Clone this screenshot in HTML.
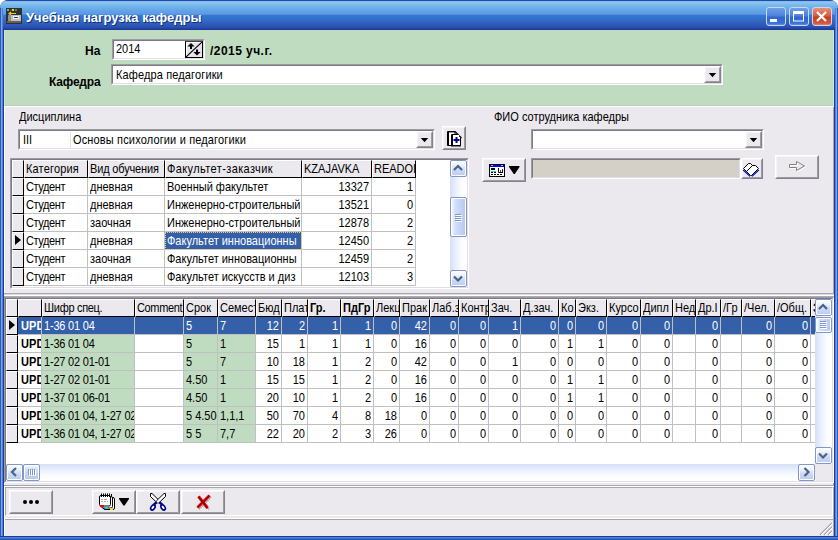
<!DOCTYPE html>
<html><head><meta charset="utf-8"><title>Учебная нагрузка кафедры</title>
<style>
*{box-sizing:border-box;margin:0;padding:0}
html,body{width:838px;height:540px;overflow:hidden;background:#fff}
body{font-family:"Liberation Sans",sans-serif;font-size:11px;color:#000;position:relative}
.a{position:absolute}
.t{position:absolute;white-space:nowrap;line-height:13px;height:13px;transform:scaleY(1.13);transform-origin:0 10px}
.x{display:inline-block;line-height:13px;height:13px;transform:scaleY(1.13);transform-origin:0 10px}
.b{font-weight:bold}
#win{position:absolute;left:0;top:0;width:838px;height:540px;overflow:hidden;background:#2a58c0;border-radius:8px 8px 0 0}
#title{position:absolute;left:0;top:0;width:838px;height:30px;border-radius:8px 8px 0 0;
background:linear-gradient(to bottom,#1c40a8 0px,#2a54b8 1px,#9accf2 1.6px,#84c3ee 3px,#70b2ea 7px,#62a2e8 11px,#5c98e4 14.3px,#3478d2 15.2px,#3270c8 19px,#3060bc 23px,#2c52b0 27px,#2244a4 28.4px,#1c3a9c 29.2px,#1c3a9c 30px)}
#title .tx{position:absolute;left:26px;top:10px;font-weight:bold;font-size:13px;line-height:15px;color:#fff;text-shadow:1px 1px 0 #10307a;white-space:nowrap}
.lb{position:absolute;top:8px;width:1px;height:528px}
#client{position:absolute;left:4px;top:30px;width:830px;height:506px;background:#ebe9ed}
.sunk{position:absolute;background:#fff;border:1px solid;border-color:#9c9aa2 #fff #fff #9c9aa2}
.sunk:before{content:"";position:absolute;left:0;top:0;right:0;bottom:0;border:1px solid;border-color:#7c7a84 #e0dee4 #e0dee4 #7c7a84;pointer-events:none}
.btn{position:absolute;background:#ebe9ed;border:1px solid;border-color:#fff #84828a #84828a #fff}
.btn:before{content:"";position:absolute;left:0;top:0;right:0;bottom:0;border:1px solid;border-color:#f6f4f8 #9c9aa2 #9c9aa2 #f6f4f8}
.cb{position:absolute;background:#ebe9ed;border:1px solid;border-color:#fff #84828a #84828a #fff}
.cb:before{content:"";position:absolute;left:0;top:0;right:0;bottom:0;border:1px solid;border-color:#f6f4f8 #9c9aa2 #9c9aa2 #f6f4f8}
.tri{position:absolute;width:0;height:0;border-style:solid;border-color:#000 transparent transparent transparent}
.grid{position:absolute;background:#fff;overflow:hidden}
.c{position:absolute;height:18px;border-right:1px solid #c0c0c0;border-bottom:1px solid #c0c0c0;white-space:nowrap;overflow:hidden;line-height:13px;padding:3px 2px 0 2px}
.h{position:absolute;height:18px;background:#ebe9ed;border:1px solid;border-color:#fff #000 #000 #fff;white-space:nowrap;overflow:hidden;line-height:13px;padding:2px 1px 0 1px}
.r{text-align:right}
.g{background:#c0dcc0}
.s{background:#3360a8;color:#fff}
.sbv{position:absolute;width:17px;background:linear-gradient(to right,#d4e0f8 0%,#eaf0fc 35%,#fbfcff 70%,#ffffff 100%)}
.sbh{position:absolute;height:17px;background:linear-gradient(to bottom,#d4e0f8 0%,#eaf0fc 35%,#fbfcff 70%,#ffffff 100%)}
.sbb{position:absolute;width:17px;height:17px;border:1px solid #8397c6;border-radius:2px;background:linear-gradient(to bottom,#ffffff 0%,#eaf1fd 30%,#c9d8f5 60%,#bccdee 100%);box-shadow:inset 0 0 0 1px #fff}
.thv{background:linear-gradient(to right,#ffffff 0%,#d4e1f9 25%,#c4d4f4 60%,#b6c7ea 100%)}
.thh{background:linear-gradient(to bottom,#ffffff 0%,#d4e1f9 25%,#c4d4f4 60%,#b6c7ea 100%)}
</style></head><body>
<div id="win">
<div id="title"><div class="tx">Учебная нагрузка кафедры</div></div>
<div class="lb" style="left:0;background:#2a58c0"></div><div class="lb" style="left:1px;background:#7aa6e2"></div><div class="lb" style="left:2px;background:#4f80d2"></div><div class="lb" style="left:3px;top:30px;height:506px;background:#1c3c9a"></div>
<div class="lb" style="left:834px;top:30px;height:506px;background:#1c3c9a"></div><div class="lb" style="left:835px;background:#4f80d2"></div><div class="lb" style="left:836px;background:#7aa6e2"></div><div class="lb" style="left:837px;background:#2a58c0"></div>
<div class="a" style="left:0;top:536px;width:838px;height:4px;background:linear-gradient(to bottom,#1c3c9a 0,#1c3c9a 25%,#4f80d2 25%,#4f80d2 50%,#3a6ccc 50%,#3a6ccc 75%,#2a58c0 75%)"></div>
<div id="client">
<div class="a" style="left:0;top:0;width:830px;height:76px;background:#c0dcc0;border-left:1px solid #cfe8cf;border-right:1px solid #cfe8cf;border-bottom:1px solid #b4d2b4"></div>
<div class="a" style="left:0;top:76px;width:830px;height:1px;background:#fff"></div>
<div class="a" style="left:0;top:77px;width:1px;height:429px;background:#fff"></div>
<div class="a" style="left:829px;top:77px;width:1px;height:429px;background:#a8a5a8"></div>
<div class="t b" style="left:81px;top:15px;font-size:12px">На</div>
<div class="t b" style="left:45px;top:46px;font-size:12px;letter-spacing:-0.2px">Кафедра</div>
<div class="t b" style="left:206px;top:15px;font-size:12px;letter-spacing:0.45px">/2015 уч.г.</div>
<div class="sunk" style="left:108px;top:9px;width:93px;height:21px"><div class="t" style="left:3px;top:3px">2014</div></div>
<div class="a" id="spin" style="left:181px;top:11px;width:18px;height:17px;background:#e6e4ea;border:1px solid #000;border-top-color:#404040"><svg width="16" height="15" viewBox="0 0 16 15" style="position:absolute;left:0;top:0"><path d="M0.5 15 V0.5 H16" stroke="#fff" fill="none"/><path d="M16 0 L0 15" stroke="#000" stroke-width="1.1" fill="none"/><path d="M5 1 L8.6 4.6 H6 V7 H4 V4.6 H1.4 Z" fill="#000"/><path d="M11 13.6 L14.6 10 H12 V7.6 H10 V10 H7.4 Z" fill="#000"/></svg></div>
<div class="sunk" style="left:107px;top:34px;width:612px;height:21px"><div class="t" style="left:4px;top:4px;letter-spacing:0.13px">Кафедра педагогики</div></div>
<div class="cb" style="left:700px;top:36px;width:17px;height:17px"><svg width="9" height="6" viewBox="0 0 9 6" style="position:absolute;left:3px;top:5px"><path d="M0.8 1 H8.2 L4.5 5.2 Z" fill="#000"/></svg></div>
<div class="t" style="left:15px;top:81px">Дисциплина</div>
<div class="sunk" style="left:14px;top:99px;width:417px;height:21px"><div class="t" style="left:4px;top:4px">III</div><div class="a" style="left:51px;top:2px;width:1px;height:16px;background:#e4e4e4"></div><div class="t" style="left:54px;top:4px;letter-spacing:0.15px">Основы психологии и педагогики</div></div>
<div class="cb" style="left:412px;top:101px;width:17px;height:17px"><svg width="9" height="6" viewBox="0 0 9 6" style="position:absolute;left:3px;top:5px"><path d="M0.8 1 H8.2 L4.5 5.2 Z" fill="#000"/></svg></div>
<div class="btn" style="left:438px;top:96px;width:24px;height:24px"><svg width="24" height="24" viewBox="0 0 24 24" style="position:absolute;left:-1px;top:-1px"><path d="M5.5 5.5 H13 V19.5 H5.5 Z" fill="#fff" stroke="#000"/><path d="M6.5 6 V19" stroke="#000"/><path d="M5 6.2 H13" stroke="#000" stroke-width="0.6"/><path d="M13 5.5 L19.5 12" stroke="#000" stroke-width="1.1" fill="none"/><path d="M9.5 8.5 H15.5 L18.5 11.5 V19.5 H9.5 Z" fill="#fff" stroke="#000"/><path d="M10.5 9 V19 M9 20 H19" stroke="#000"/><rect x="16" y="9" width="1.2" height="1.2" fill="#fff"/><path d="M14.5 11 V17 M11.5 14 H17.5" stroke="#000090" stroke-width="2"/></svg></div>
<div class="sunk" style="left:6px;top:128px;width:459px;height:131px"></div>
<div class="grid" id="g1" style="left:8px;top:130px;width:455px;height:127px">
<div class="h" style="left:0px;top:0;width:12px"><span class="x"></span></div>
<div class="h" style="left:12px;top:0;width:64px"><span class="x" style="letter-spacing:0.17px">Категория</span></div>
<div class="h" style="left:76px;top:0;width:77px"><span class="x" style="letter-spacing:-0.16px">Вид обучения</span></div>
<div class="h" style="left:153px;top:0;width:137px"><span class="x" style="letter-spacing:0.39px">Факультет-заказчик</span></div>
<div class="h" style="left:290px;top:0;width:70px"><span class="x">KZAJAVKA</span></div>
<div class="h" style="left:360px;top:0;width:44px"><span class="x">READOI</span></div>
<div class="h" style="left:0;top:18px;width:12px"></div>
<div class="c" style="left:12px;top:18px;width:64px"><span class="x" style="letter-spacing:-0.4px">Студент</span></div>
<div class="c" style="left:76px;top:18px;width:77px"><span class="x">дневная</span></div>
<div class="c" style="left:153px;top:18px;width:137px"><span class="x">Военный факультет</span></div>
<div class="c r" style="left:290px;top:18px;width:70px"><span class="x">13327</span></div>
<div class="c r" style="left:360px;top:18px;width:44px"><span class="x">1</span></div>
<div class="h" style="left:0;top:36px;width:12px"></div>
<div class="c" style="left:12px;top:36px;width:64px"><span class="x" style="letter-spacing:-0.4px">Студент</span></div>
<div class="c" style="left:76px;top:36px;width:77px"><span class="x">дневная</span></div>
<div class="c" style="left:153px;top:36px;width:137px"><span class="x">Инженерно-строительный</span></div>
<div class="c r" style="left:290px;top:36px;width:70px"><span class="x">13521</span></div>
<div class="c r" style="left:360px;top:36px;width:44px"><span class="x">0</span></div>
<div class="h" style="left:0;top:54px;width:12px"></div>
<div class="c" style="left:12px;top:54px;width:64px"><span class="x" style="letter-spacing:-0.4px">Студент</span></div>
<div class="c" style="left:76px;top:54px;width:77px"><span class="x">заочная</span></div>
<div class="c" style="left:153px;top:54px;width:137px"><span class="x">Инженерно-строительный</span></div>
<div class="c r" style="left:290px;top:54px;width:70px"><span class="x">12878</span></div>
<div class="c r" style="left:360px;top:54px;width:44px"><span class="x">2</span></div>
<div class="h" style="left:0;top:72px;width:12px"><div class="a" style="left:2px;top:2px;width:0;height:0;border-style:solid;border-width:5.5px 0 5.5px 6px;border-color:transparent transparent transparent #000"></div></div>
<div class="c" style="left:12px;top:72px;width:64px"><span class="x" style="letter-spacing:-0.4px">Студент</span></div>
<div class="c" style="left:76px;top:72px;width:77px"><span class="x">дневная</span></div>
<div class="c s" style="left:153px;top:72px;width:137px;outline:1px dotted #e8d080;outline-offset:-1px"><span class="x">Факультет инновационны</span></div>
<div class="c r" style="left:290px;top:72px;width:70px"><span class="x">12450</span></div>
<div class="c r" style="left:360px;top:72px;width:44px"><span class="x">2</span></div>
<div class="h" style="left:0;top:90px;width:12px"></div>
<div class="c" style="left:12px;top:90px;width:64px"><span class="x" style="letter-spacing:-0.4px">Студент</span></div>
<div class="c" style="left:76px;top:90px;width:77px"><span class="x">заочная</span></div>
<div class="c" style="left:153px;top:90px;width:137px"><span class="x">Факультет инновационны</span></div>
<div class="c r" style="left:290px;top:90px;width:70px"><span class="x">12459</span></div>
<div class="c r" style="left:360px;top:90px;width:44px"><span class="x">2</span></div>
<div class="h" style="left:0;top:108px;width:12px"></div>
<div class="c" style="left:12px;top:108px;width:64px"><span class="x" style="letter-spacing:-0.4px">Студент</span></div>
<div class="c" style="left:76px;top:108px;width:77px"><span class="x">дневная</span></div>
<div class="c" style="left:153px;top:108px;width:137px"><span class="x">Факультет искусств и диз</span></div>
<div class="c r" style="left:290px;top:108px;width:70px"><span class="x">12103</span></div>
<div class="c r" style="left:360px;top:108px;width:44px"><span class="x">3</span></div>
<div class="sbv" style="left:438px;top:0;height:127px"></div>
<div class="sbb" style="left:438px;top:0"><svg width="17" height="17" viewBox="0 0 17 17" style="position:absolute;left:-1px;top:-1px"><path d="M4 10 L8 6 L12 10" stroke="#4d6185" stroke-width="2.2" fill="none"/></svg></div>
<div class="sbb" style="left:438px;top:110px"><svg width="17" height="17" viewBox="0 0 17 17" style="position:absolute;left:-1px;top:-1px"><path d="M4 6.5 L8 10.5 L12 6.5" stroke="#4d6185" stroke-width="2.2" fill="none"/></svg></div>
<div class="sbb thv" style="left:438px;top:37px;height:40px"><div class="a" style="left:4px;top:16px;width:6px;height:1px;background:#8397c6;box-shadow:0 2px 0 #8397c6,0 4px 0 #8397c6,0 6px 0 #8397c6,1px 1px 0 #fff,1px 3px 0 #fff,1px 5px 0 #fff,1px 7px 0 #fff"></div></div>
</div>
<div class="t" style="left:490px;top:81px">ФИО сотрудника кафедры</div>
<div class="sunk" style="left:527px;top:99px;width:233px;height:21px"></div>
<div class="cb" style="left:741px;top:101px;width:17px;height:17px"><svg width="9" height="6" viewBox="0 0 9 6" style="position:absolute;left:3px;top:5px"><path d="M0.8 1 H8.2 L4.5 5.2 Z" fill="#000"/></svg></div>
<div class="btn" style="left:478px;top:128px;width:44px;height:24px"><svg width="44" height="24" viewBox="0 0 44 24" style="position:absolute;left:-1px;top:-1px"><rect x="7.5" y="6.5" width="15" height="12" fill="#fff" stroke="#000"/><rect x="8" y="7" width="14" height="2" fill="#0000ff"/><rect x="9" y="7" width="2" height="1" fill="#c0c0a0"/><rect x="19" y="7" width="2" height="1" fill="#c0c0a0"/><rect x="9" y="10" width="4" height="2" fill="#000"/><rect x="9" y="13" width="5" height="1" fill="#00e0e0"/><rect x="9" y="14" width="2" height="1" fill="#000"/><rect x="12" y="14" width="2" height="1" fill="#000"/><path d="M9 16.5 H11 M12 16.5 H14 M15 16.5 H17 M18 16.5 H20" stroke="#000"/><path d="M16.5 10 V14.5 H21" stroke="#000" fill="none"/><rect x="18" y="12" width="1" height="2" fill="#f00000"/><rect x="20" y="11" width="1" height="3" fill="#0000f0"/><path d="M27 8 H37.5 V9 L32.8 16 H31.7 L27 9 Z" fill="#000"/></svg></div>
<div class="sunk" style="left:527px;top:128px;width:210px;height:21px;background:#d4d0c8"></div>
<div class="btn" style="left:737px;top:128px;width:22px;height:21px"><svg width="22" height="21" viewBox="0 0 22 21" style="position:absolute;left:-1px;top:-1px"><path d="M2.5 10.5 L7.5 5.5 H9.5 L11.5 7.5 H14.5 L17.5 10.5 L10.5 17.5 H9.5 Z" fill="#fff" stroke="#000"/><path d="M11.5 7.5 L5.5 13.5" stroke="#000"/><path d="M16.5 11.5 L10.5 17.5" stroke="#000"/><path d="M2.2 12 L9 18.3 M11 18.3 L17.8 12" stroke="#0000e0" stroke-width="1.1"/></svg></div>
<div class="btn" style="left:771px;top:125px;width:44px;height:24px"><svg width="20" height="14" viewBox="0 0 20 14" style="position:absolute;left:12px;top:3px"><path d="M2.5 6.5 H9.5 V3.5 L17.5 8 L9.5 12.5 V9.5 H2.5 Z" fill="none" stroke="#fff"/><path d="M1.5 5.5 H8.5 V2.5 L16.5 7 L8.5 11.5 V8.5 H1.5 Z" fill="none" stroke="#808080"/></svg></div>
<div class="a" style="left:0;top:263px;width:830px;height:1px;background:#a8a6ac"></div>
<div class="a" style="left:0;top:264px;width:830px;height:1px;background:#dddbe0"></div>
<div class="a" style="left:0;top:265px;width:830px;height:1px;background:#fff"></div>
<div class="a" style="left:0;top:266px;width:830px;height:1px;background:#aeacb2"></div>
<div class="sunk" style="left:0px;top:267px;width:830px;height:186px"></div>
<div class="grid" id="g2" style="left:2px;top:269px;width:826px;height:182px">
<div class="h" style="left:0px;top:0;width:12px"><span class="x"></span></div>
<div class="h" style="left:12px;top:0;width:24px"><span class="x"></span></div>
<div class="h" style="left:36px;top:0;width:93px"><span class="x" style="letter-spacing:-0.3px">Шифр спец.</span></div>
<div class="h" style="left:129px;top:0;width:49px"><span class="x" style="letter-spacing:-0.35px">Comment</span></div>
<div class="h" style="left:178px;top:0;width:34px"><span class="x">Срок</span></div>
<div class="h" style="left:212px;top:0;width:38px"><span class="x">Семест</span></div>
<div class="h" style="left:250px;top:0;width:26px"><span class="x">Бюд</span></div>
<div class="h" style="left:276px;top:0;width:26px"><span class="x">Плат</span></div>
<div class="h" style="left:302px;top:0;width:33px;font-weight:bold"><span class="x">Гр.</span></div>
<div class="h" style="left:335px;top:0;width:33px;font-weight:bold"><span class="x">ПдГр</span></div>
<div class="h" style="left:368px;top:0;width:26px"><span class="x">Лекц</span></div>
<div class="h" style="left:394px;top:0;width:30px"><span class="x">Прак</span></div>
<div class="h" style="left:424px;top:0;width:29px"><span class="x">Лаб.з</span></div>
<div class="h" style="left:453px;top:0;width:30px"><span class="x">Контр</span></div>
<div class="h" style="left:483px;top:0;width:32px"><span class="x">Зач.</span></div>
<div class="h" style="left:515px;top:0;width:38px"><span class="x">Д.зач.</span></div>
<div class="h" style="left:553px;top:0;width:17px"><span class="x">Ко</span></div>
<div class="h" style="left:570px;top:0;width:31px"><span class="x">Экз.</span></div>
<div class="h" style="left:601px;top:0;width:34px"><span class="x">Курсо</span></div>
<div class="h" style="left:635px;top:0;width:32px"><span class="x">Дипл</span></div>
<div class="h" style="left:667px;top:0;width:23px"><span class="x">Нед</span></div>
<div class="h" style="left:690px;top:0;width:25px"><span class="x">Др.I</span></div>
<div class="h" style="left:715px;top:0;width:21px"><span class="x">/Гр</span></div>
<div class="h" style="left:736px;top:0;width:33px"><span class="x">/Чел.</span></div>
<div class="h" style="left:769px;top:0;width:36px"><span class="x">/Общ.</span></div>
<div class="h" style="left:805px;top:0;width:5px;font-weight:bold"><span class="x">З</span></div>
<div class="h" style="left:0;top:18px;width:12px"><div class="a" style="left:2px;top:2px;width:0;height:0;border-style:solid;border-width:5.5px 0 5.5px 6px;border-color:transparent transparent transparent #000"></div></div>
<div class="c s" style="left:12px;top:18px;width:24px;font-weight:bold;padding-left:3px;letter-spacing:0.1px"><span class="x">UPD</span></div>
<div class="c s" style="left:36px;top:18px;width:93px"><span class="x" style="letter-spacing:-0.2px">1-36 01 04</span></div>
<div class="c s" style="left:129px;top:18px;width:49px"><span class="x"></span></div>
<div class="c s" style="left:178px;top:18px;width:34px"><span class="x">5</span></div>
<div class="c s" style="left:212px;top:18px;width:38px"><span class="x">7</span></div>
<div class="c r s" style="left:250px;top:18px;width:26px"><span class="x">12</span></div>
<div class="c r s" style="left:276px;top:18px;width:26px"><span class="x">2</span></div>
<div class="c r s" style="left:302px;top:18px;width:33px"><span class="x">1</span></div>
<div class="c r s" style="left:335px;top:18px;width:33px"><span class="x">1</span></div>
<div class="c r s" style="left:368px;top:18px;width:26px"><span class="x">0</span></div>
<div class="c r s" style="left:394px;top:18px;width:30px"><span class="x">42</span></div>
<div class="c r s" style="left:424px;top:18px;width:29px"><span class="x">0</span></div>
<div class="c r s" style="left:453px;top:18px;width:30px"><span class="x">0</span></div>
<div class="c r s" style="left:483px;top:18px;width:32px"><span class="x">1</span></div>
<div class="c r s" style="left:515px;top:18px;width:38px"><span class="x">0</span></div>
<div class="c r s" style="left:553px;top:18px;width:17px"><span class="x">0</span></div>
<div class="c r s" style="left:570px;top:18px;width:31px"><span class="x">0</span></div>
<div class="c r s" style="left:601px;top:18px;width:34px"><span class="x">0</span></div>
<div class="c r s" style="left:635px;top:18px;width:32px"><span class="x">0</span></div>
<div class="c r s" style="left:667px;top:18px;width:23px"><span class="x"></span></div>
<div class="c r s" style="left:690px;top:18px;width:25px"><span class="x">0</span></div>
<div class="c r s" style="left:715px;top:18px;width:21px"><span class="x"></span></div>
<div class="c r s" style="left:736px;top:18px;width:33px"><span class="x">0</span></div>
<div class="c r s" style="left:769px;top:18px;width:36px"><span class="x">0</span></div>
<div class="c r s" style="left:805px;top:18px;width:5px"><span class="x"></span></div>
<div class="h" style="left:0;top:36px;width:12px"></div>
<div class="c" style="left:12px;top:36px;width:24px;font-weight:bold;padding-left:3px;letter-spacing:0.1px"><span class="x">UPD</span></div>
<div class="c g" style="left:36px;top:36px;width:93px"><span class="x" style="letter-spacing:-0.2px">1-36 01 04</span></div>
<div class="c" style="left:129px;top:36px;width:49px"><span class="x"></span></div>
<div class="c g" style="left:178px;top:36px;width:34px"><span class="x">5</span></div>
<div class="c g" style="left:212px;top:36px;width:38px"><span class="x">1</span></div>
<div class="c r" style="left:250px;top:36px;width:26px"><span class="x">15</span></div>
<div class="c r" style="left:276px;top:36px;width:26px"><span class="x">1</span></div>
<div class="c r" style="left:302px;top:36px;width:33px"><span class="x">1</span></div>
<div class="c r" style="left:335px;top:36px;width:33px"><span class="x">1</span></div>
<div class="c r" style="left:368px;top:36px;width:26px"><span class="x">0</span></div>
<div class="c r" style="left:394px;top:36px;width:30px"><span class="x">16</span></div>
<div class="c r" style="left:424px;top:36px;width:29px"><span class="x">0</span></div>
<div class="c r" style="left:453px;top:36px;width:30px"><span class="x">0</span></div>
<div class="c r" style="left:483px;top:36px;width:32px"><span class="x">0</span></div>
<div class="c r" style="left:515px;top:36px;width:38px"><span class="x">0</span></div>
<div class="c r" style="left:553px;top:36px;width:17px"><span class="x">1</span></div>
<div class="c r" style="left:570px;top:36px;width:31px"><span class="x">1</span></div>
<div class="c r" style="left:601px;top:36px;width:34px"><span class="x">0</span></div>
<div class="c r" style="left:635px;top:36px;width:32px"><span class="x">0</span></div>
<div class="c r" style="left:667px;top:36px;width:23px"><span class="x"></span></div>
<div class="c r" style="left:690px;top:36px;width:25px"><span class="x">0</span></div>
<div class="c r" style="left:715px;top:36px;width:21px"><span class="x"></span></div>
<div class="c r" style="left:736px;top:36px;width:33px"><span class="x">0</span></div>
<div class="c r" style="left:769px;top:36px;width:36px"><span class="x">0</span></div>
<div class="c r" style="left:805px;top:36px;width:5px"><span class="x"></span></div>
<div class="h" style="left:0;top:54px;width:12px"></div>
<div class="c" style="left:12px;top:54px;width:24px;font-weight:bold;padding-left:3px;letter-spacing:0.1px"><span class="x">UPD</span></div>
<div class="c g" style="left:36px;top:54px;width:93px"><span class="x" style="letter-spacing:-0.2px">1-27 02 01-01</span></div>
<div class="c" style="left:129px;top:54px;width:49px"><span class="x"></span></div>
<div class="c g" style="left:178px;top:54px;width:34px"><span class="x">5</span></div>
<div class="c g" style="left:212px;top:54px;width:38px"><span class="x">7</span></div>
<div class="c r" style="left:250px;top:54px;width:26px"><span class="x">10</span></div>
<div class="c r" style="left:276px;top:54px;width:26px"><span class="x">18</span></div>
<div class="c r" style="left:302px;top:54px;width:33px"><span class="x">1</span></div>
<div class="c r" style="left:335px;top:54px;width:33px"><span class="x">2</span></div>
<div class="c r" style="left:368px;top:54px;width:26px"><span class="x">0</span></div>
<div class="c r" style="left:394px;top:54px;width:30px"><span class="x">42</span></div>
<div class="c r" style="left:424px;top:54px;width:29px"><span class="x">0</span></div>
<div class="c r" style="left:453px;top:54px;width:30px"><span class="x">0</span></div>
<div class="c r" style="left:483px;top:54px;width:32px"><span class="x">1</span></div>
<div class="c r" style="left:515px;top:54px;width:38px"><span class="x">0</span></div>
<div class="c r" style="left:553px;top:54px;width:17px"><span class="x">0</span></div>
<div class="c r" style="left:570px;top:54px;width:31px"><span class="x">0</span></div>
<div class="c r" style="left:601px;top:54px;width:34px"><span class="x">0</span></div>
<div class="c r" style="left:635px;top:54px;width:32px"><span class="x">0</span></div>
<div class="c r" style="left:667px;top:54px;width:23px"><span class="x"></span></div>
<div class="c r" style="left:690px;top:54px;width:25px"><span class="x">0</span></div>
<div class="c r" style="left:715px;top:54px;width:21px"><span class="x"></span></div>
<div class="c r" style="left:736px;top:54px;width:33px"><span class="x">0</span></div>
<div class="c r" style="left:769px;top:54px;width:36px"><span class="x">0</span></div>
<div class="c r" style="left:805px;top:54px;width:5px"><span class="x"></span></div>
<div class="h" style="left:0;top:72px;width:12px"></div>
<div class="c" style="left:12px;top:72px;width:24px;font-weight:bold;padding-left:3px;letter-spacing:0.1px"><span class="x">UPD</span></div>
<div class="c g" style="left:36px;top:72px;width:93px"><span class="x" style="letter-spacing:-0.2px">1-27 02 01-01</span></div>
<div class="c" style="left:129px;top:72px;width:49px"><span class="x"></span></div>
<div class="c g" style="left:178px;top:72px;width:34px"><span class="x">4.50</span></div>
<div class="c g" style="left:212px;top:72px;width:38px"><span class="x">1</span></div>
<div class="c r" style="left:250px;top:72px;width:26px"><span class="x">15</span></div>
<div class="c r" style="left:276px;top:72px;width:26px"><span class="x">15</span></div>
<div class="c r" style="left:302px;top:72px;width:33px"><span class="x">1</span></div>
<div class="c r" style="left:335px;top:72px;width:33px"><span class="x">2</span></div>
<div class="c r" style="left:368px;top:72px;width:26px"><span class="x">0</span></div>
<div class="c r" style="left:394px;top:72px;width:30px"><span class="x">16</span></div>
<div class="c r" style="left:424px;top:72px;width:29px"><span class="x">0</span></div>
<div class="c r" style="left:453px;top:72px;width:30px"><span class="x">0</span></div>
<div class="c r" style="left:483px;top:72px;width:32px"><span class="x">0</span></div>
<div class="c r" style="left:515px;top:72px;width:38px"><span class="x">0</span></div>
<div class="c r" style="left:553px;top:72px;width:17px"><span class="x">1</span></div>
<div class="c r" style="left:570px;top:72px;width:31px"><span class="x">1</span></div>
<div class="c r" style="left:601px;top:72px;width:34px"><span class="x">0</span></div>
<div class="c r" style="left:635px;top:72px;width:32px"><span class="x">0</span></div>
<div class="c r" style="left:667px;top:72px;width:23px"><span class="x"></span></div>
<div class="c r" style="left:690px;top:72px;width:25px"><span class="x">0</span></div>
<div class="c r" style="left:715px;top:72px;width:21px"><span class="x"></span></div>
<div class="c r" style="left:736px;top:72px;width:33px"><span class="x">0</span></div>
<div class="c r" style="left:769px;top:72px;width:36px"><span class="x">0</span></div>
<div class="c r" style="left:805px;top:72px;width:5px"><span class="x"></span></div>
<div class="h" style="left:0;top:90px;width:12px"></div>
<div class="c" style="left:12px;top:90px;width:24px;font-weight:bold;padding-left:3px;letter-spacing:0.1px"><span class="x">UPD</span></div>
<div class="c g" style="left:36px;top:90px;width:93px"><span class="x" style="letter-spacing:-0.2px">1-37 01 06-01</span></div>
<div class="c" style="left:129px;top:90px;width:49px"><span class="x"></span></div>
<div class="c g" style="left:178px;top:90px;width:34px"><span class="x">4.50</span></div>
<div class="c g" style="left:212px;top:90px;width:38px"><span class="x">1</span></div>
<div class="c r" style="left:250px;top:90px;width:26px"><span class="x">20</span></div>
<div class="c r" style="left:276px;top:90px;width:26px"><span class="x">10</span></div>
<div class="c r" style="left:302px;top:90px;width:33px"><span class="x">1</span></div>
<div class="c r" style="left:335px;top:90px;width:33px"><span class="x">2</span></div>
<div class="c r" style="left:368px;top:90px;width:26px"><span class="x">0</span></div>
<div class="c r" style="left:394px;top:90px;width:30px"><span class="x">16</span></div>
<div class="c r" style="left:424px;top:90px;width:29px"><span class="x">0</span></div>
<div class="c r" style="left:453px;top:90px;width:30px"><span class="x">0</span></div>
<div class="c r" style="left:483px;top:90px;width:32px"><span class="x">0</span></div>
<div class="c r" style="left:515px;top:90px;width:38px"><span class="x">0</span></div>
<div class="c r" style="left:553px;top:90px;width:17px"><span class="x">1</span></div>
<div class="c r" style="left:570px;top:90px;width:31px"><span class="x">1</span></div>
<div class="c r" style="left:601px;top:90px;width:34px"><span class="x">0</span></div>
<div class="c r" style="left:635px;top:90px;width:32px"><span class="x">0</span></div>
<div class="c r" style="left:667px;top:90px;width:23px"><span class="x"></span></div>
<div class="c r" style="left:690px;top:90px;width:25px"><span class="x">0</span></div>
<div class="c r" style="left:715px;top:90px;width:21px"><span class="x"></span></div>
<div class="c r" style="left:736px;top:90px;width:33px"><span class="x">0</span></div>
<div class="c r" style="left:769px;top:90px;width:36px"><span class="x">0</span></div>
<div class="c r" style="left:805px;top:90px;width:5px"><span class="x"></span></div>
<div class="h" style="left:0;top:108px;width:12px"></div>
<div class="c" style="left:12px;top:108px;width:24px;font-weight:bold;padding-left:3px;letter-spacing:0.1px"><span class="x">UPD</span></div>
<div class="c g" style="left:36px;top:108px;width:93px"><span class="x" style="letter-spacing:-0.2px">1-36 01 04, 1-27 02</span></div>
<div class="c" style="left:129px;top:108px;width:49px"><span class="x"></span></div>
<div class="c g" style="left:178px;top:108px;width:34px"><span class="x">5 4.50</span></div>
<div class="c g" style="left:212px;top:108px;width:38px"><span class="x">1,1,1</span></div>
<div class="c r" style="left:250px;top:108px;width:26px"><span class="x">50</span></div>
<div class="c r" style="left:276px;top:108px;width:26px"><span class="x">70</span></div>
<div class="c r" style="left:302px;top:108px;width:33px"><span class="x">4</span></div>
<div class="c r" style="left:335px;top:108px;width:33px"><span class="x">8</span></div>
<div class="c r" style="left:368px;top:108px;width:26px"><span class="x">18</span></div>
<div class="c r" style="left:394px;top:108px;width:30px"><span class="x">0</span></div>
<div class="c r" style="left:424px;top:108px;width:29px"><span class="x">0</span></div>
<div class="c r" style="left:453px;top:108px;width:30px"><span class="x">0</span></div>
<div class="c r" style="left:483px;top:108px;width:32px"><span class="x">0</span></div>
<div class="c r" style="left:515px;top:108px;width:38px"><span class="x">0</span></div>
<div class="c r" style="left:553px;top:108px;width:17px"><span class="x">0</span></div>
<div class="c r" style="left:570px;top:108px;width:31px"><span class="x">0</span></div>
<div class="c r" style="left:601px;top:108px;width:34px"><span class="x">0</span></div>
<div class="c r" style="left:635px;top:108px;width:32px"><span class="x">0</span></div>
<div class="c r" style="left:667px;top:108px;width:23px"><span class="x"></span></div>
<div class="c r" style="left:690px;top:108px;width:25px"><span class="x">0</span></div>
<div class="c r" style="left:715px;top:108px;width:21px"><span class="x"></span></div>
<div class="c r" style="left:736px;top:108px;width:33px"><span class="x">0</span></div>
<div class="c r" style="left:769px;top:108px;width:36px"><span class="x">0</span></div>
<div class="c r" style="left:805px;top:108px;width:5px"><span class="x"></span></div>
<div class="h" style="left:0;top:126px;width:12px"></div>
<div class="c" style="left:12px;top:126px;width:24px;font-weight:bold;padding-left:3px;letter-spacing:0.1px"><span class="x">UPD</span></div>
<div class="c g" style="left:36px;top:126px;width:93px"><span class="x" style="letter-spacing:-0.2px">1-36 01 04, 1-27 02</span></div>
<div class="c" style="left:129px;top:126px;width:49px"><span class="x"></span></div>
<div class="c g" style="left:178px;top:126px;width:34px"><span class="x">5 5</span></div>
<div class="c g" style="left:212px;top:126px;width:38px"><span class="x">7,7</span></div>
<div class="c r" style="left:250px;top:126px;width:26px"><span class="x">22</span></div>
<div class="c r" style="left:276px;top:126px;width:26px"><span class="x">20</span></div>
<div class="c r" style="left:302px;top:126px;width:33px"><span class="x">2</span></div>
<div class="c r" style="left:335px;top:126px;width:33px"><span class="x">3</span></div>
<div class="c r" style="left:368px;top:126px;width:26px"><span class="x">26</span></div>
<div class="c r" style="left:394px;top:126px;width:30px"><span class="x">0</span></div>
<div class="c r" style="left:424px;top:126px;width:29px"><span class="x">0</span></div>
<div class="c r" style="left:453px;top:126px;width:30px"><span class="x">0</span></div>
<div class="c r" style="left:483px;top:126px;width:32px"><span class="x">0</span></div>
<div class="c r" style="left:515px;top:126px;width:38px"><span class="x">0</span></div>
<div class="c r" style="left:553px;top:126px;width:17px"><span class="x">0</span></div>
<div class="c r" style="left:570px;top:126px;width:31px"><span class="x">0</span></div>
<div class="c r" style="left:601px;top:126px;width:34px"><span class="x">0</span></div>
<div class="c r" style="left:635px;top:126px;width:32px"><span class="x">0</span></div>
<div class="c r" style="left:667px;top:126px;width:23px"><span class="x"></span></div>
<div class="c r" style="left:690px;top:126px;width:25px"><span class="x">0</span></div>
<div class="c r" style="left:715px;top:126px;width:21px"><span class="x"></span></div>
<div class="c r" style="left:736px;top:126px;width:33px"><span class="x">0</span></div>
<div class="c r" style="left:769px;top:126px;width:36px"><span class="x">0</span></div>
<div class="c r" style="left:805px;top:126px;width:5px"><span class="x"></span></div>
<div class="sbv" style="left:809px;top:0;height:165px"></div>
<div class="sbb" style="left:809px;top:0"><svg width="17" height="17" viewBox="0 0 17 17" style="position:absolute;left:-1px;top:-1px"><path d="M4 10 L8 6 L12 10" stroke="#4d6185" stroke-width="2.2" fill="none"/></svg></div>
<div class="sbb" style="left:809px;top:148px"><svg width="17" height="17" viewBox="0 0 17 17" style="position:absolute;left:-1px;top:-1px"><path d="M4 6.5 L8 10.5 L12 6.5" stroke="#4d6185" stroke-width="2.2" fill="none"/></svg></div>
<div class="sbb thv" style="left:809px;top:18px;height:16px"><div class="a" style="left:4px;top:3px;width:6px;height:1px;background:#8397c6;box-shadow:0 2px 0 #8397c6,0 4px 0 #8397c6,0 6px 0 #8397c6,1px 1px 0 #fff,1px 3px 0 #fff,1px 5px 0 #fff,1px 7px 0 #fff"></div></div>
<div class="sbh" style="left:0;top:165px;width:809px"></div>
<div class="sbb" style="left:0;top:165px"><svg width="17" height="17" viewBox="0 0 17 17" style="position:absolute;left:-1px;top:-1px"><path d="M10 4 L6 8 L10 12" stroke="#4d6185" stroke-width="2.2" fill="none"/></svg></div>
<div class="sbb" style="left:792px;top:165px"><svg width="17" height="17" viewBox="0 0 17 17" style="position:absolute;left:-1px;top:-1px"><path d="M6.5 4 L10.5 8 L6.5 12" stroke="#4d6185" stroke-width="2.2" fill="none"/></svg></div>
<div class="sbb thh" style="left:17px;top:165px"><div class="a" style="left:4px;top:4px;width:1px;height:6px;background:#8397c6;box-shadow:2px 0 0 #8397c6,4px 0 0 #8397c6,6px 0 0 #8397c6,1px 1px 0 #fff,3px 1px 0 #fff,5px 1px 0 #fff,7px 1px 0 #fff"></div></div>
<div class="a" style="left:809px;top:165px;width:17px;height:17px;background:#ebe9ed"></div>
</div>
<div class="a" style="left:0;top:455px;width:830px;height:1px;background:#a8a6ac"></div><div class="a" style="left:0;top:456px;width:830px;height:1px;background:#fff"></div><div class="a" style="left:1px;top:457px;width:828px;height:29px;border:1px solid;border-color:#a8a6ac #fff #fff #a8a6ac"></div>
<div class="btn" style="left:5px;top:460px;width:44px;height:24px"><div class="a" style="left:13px;top:9px;width:4px;height:4px;border-radius:2px;background:#000;box-shadow:6px 0 0 #000,12px 0 0 #000"></div></div>
<div class="btn" style="left:88px;top:460px;width:44px;height:24px"><svg width="44" height="24" viewBox="0 0 44 24" style="position:absolute;left:-1px;top:-1px"><rect x="11.5" y="7.5" width="11" height="12" rx="1.5" fill="#fff" stroke="#000"/><rect x="9.5" y="6.5" width="11" height="11.5" rx="1.5" fill="#fff" stroke="#000"/><rect x="7.5" y="5.5" width="11" height="10.5" rx="1.5" fill="#fff" stroke="#000"/><path d="M9.5 3.5 V7 M11.5 3.5 V7 M13.5 3.5 V7 M15.5 3.5 V7 M17.5 3.5 V7 M19.5 4 V6" stroke="#000"/><path d="M9 9.5 H11 M12 9.5 H15 M9 11.5 H11 M12 11.5 H14 M15 11.5 H16" stroke="#b0b0b0"/><rect x="8" y="15" width="4" height="2" fill="#f00000"/><rect x="13" y="17" width="3" height="2" fill="#00e0e0"/><rect x="18" y="18" width="3" height="2" fill="#f0e000"/><path d="M27 8 H37 V9 L32.6 15.5 H31.4 L27 9 Z" fill="#000"/></svg></div>
<div class="btn" style="left:132px;top:460px;width:44px;height:24px"><svg width="44" height="24" viewBox="0 0 44 24" style="position:absolute;left:-1px;top:-1px"><path d="M21 12 L17.2 15.2 M23 12 L26.8 15.2" stroke="#000090" stroke-width="2.4" fill="none"/><ellipse cx="16.9" cy="17.4" rx="1.8" ry="2.8" fill="#fff" stroke="#000090" stroke-width="1.7" transform="rotate(35 16.9 17.4)"/><ellipse cx="27.1" cy="17.4" rx="1.8" ry="2.8" fill="#fff" stroke="#000090" stroke-width="1.7" transform="rotate(-35 27.1 17.4)"/><path d="M14.5 3.5 H16 L23.5 10.8 L21.3 13 L14.5 6.5 Z" fill="#fff" stroke="#000" stroke-width="1"/><path d="M29.5 3.5 H28 L20.5 10.8 L22.7 13 L29.5 6.5 Z" fill="#fff" stroke="#000" stroke-width="1"/><rect x="21" y="11" width="2" height="1.5" fill="#fff"/></svg></div>
<div class="btn" style="left:177px;top:460px;width:44px;height:24px"><svg width="44" height="24" viewBox="0 0 44 24" style="position:absolute;left:-1px;top:-1px"><path d="M19 8 L28 19.3 M30 7 L18 19" stroke="#9a989c" stroke-width="2" stroke-dasharray="1.2 0.8"/><path d="M17.5 6.5 L26.5 18 M28.5 5.5 L16.5 17.5" stroke="#f01010" stroke-width="3"/><path d="M17.5 6.5 L26.5 18 M28.5 5.5 L16.5 17.5" stroke="#9c0000" stroke-width="1.6"/></svg></div>
<div class="a" style="left:1px;top:488px;width:828px;height:1px;background:#fff"></div>
<div class="a" style="left:1px;top:489px;width:828px;height:1px;background:#a8a5a8"></div>
<svg class="a" width="14" height="14" viewBox="0 0 14 14" style="left:815px;top:492px"><path d="M13 1 L1 13 M13 5 L5 13 M13 9 L9 13" stroke="#a4a2a8" stroke-width="1.5"/><path d="M14 1 L2 13 M14 5 L6 13 M14 9 L10 13" stroke="#fff" stroke-width="1"/></svg>
</div>
<svg class="a" width="16" height="16" viewBox="0 0 16 16" style="left:6px;top:8px"><rect x="0" y="0" width="16" height="16" fill="#303030"/><rect x="1" y="1" width="2" height="2" fill="#00e0e0"/><rect x="4" y="1" width="2" height="2" fill="#e00000"/><rect x="6" y="1" width="2" height="2" fill="#e0e000"/><rect x="9" y="1" width="2" height="2" fill="#00c000"/><rect x="5" y="7" width="10" height="6" fill="#c0c0c0"/><rect x="7" y="8" width="6" height="3" fill="#f0f0f0"/><rect x="8" y="9" width="4" height="1" fill="#404040"/><path d="M3 5.5 H10 M5 4 L3 5.5 L5 7" stroke="#e0d040" stroke-width="1.2" fill="none"/><rect x="2" y="7" width="3" height="6" fill="#909090"/><rect x="1" y="13" width="14" height="2" fill="#606060"/></svg>
<div class="a" style="left:766px;top:7px;width:20px;height:19px;border-radius:3px;border:1px solid #c8d8f8;background:linear-gradient(to bottom,#6f9fe8 0%,#4f82dc 45%,#3266cc 55%,#3a72d8 90%,#5a90e6 100%)"><svg width="19" height="19" viewBox="0 0 19 19" style="position:absolute;left:-1px;top:-1px"><rect x="4" y="12" width="7" height="3" fill="#fff"/></svg></div>
<div class="a" style="left:789px;top:7px;width:20px;height:19px;border-radius:3px;border:1px solid #c8d8f8;background:linear-gradient(to bottom,#6f9fe8 0%,#4f82dc 45%,#3266cc 55%,#3a72d8 90%,#5a90e6 100%)"><svg width="19" height="19" viewBox="0 0 19 19" style="position:absolute;left:-1px;top:-1px"><rect x="4.5" y="5" width="10" height="9" fill="none" stroke="#fff" stroke-width="1"/><rect x="4" y="4" width="11" height="3" fill="#fff"/></svg></div>
<div class="a" style="left:812px;top:7px;width:20px;height:19px;border-radius:3px;border:1px solid #c8d8f8;background:linear-gradient(to bottom,#e8907a 0%,#dd5c3c 45%,#c83c1c 55%,#d8583a 90%,#e88060 100%)"><svg width="19" height="19" viewBox="0 0 19 19" style="position:absolute;left:-1px;top:-1px"><path d="M5 5 L14 14 M14 5 L5 14" stroke="#fff" stroke-width="2.2"/></svg></div>
</div></body></html>
